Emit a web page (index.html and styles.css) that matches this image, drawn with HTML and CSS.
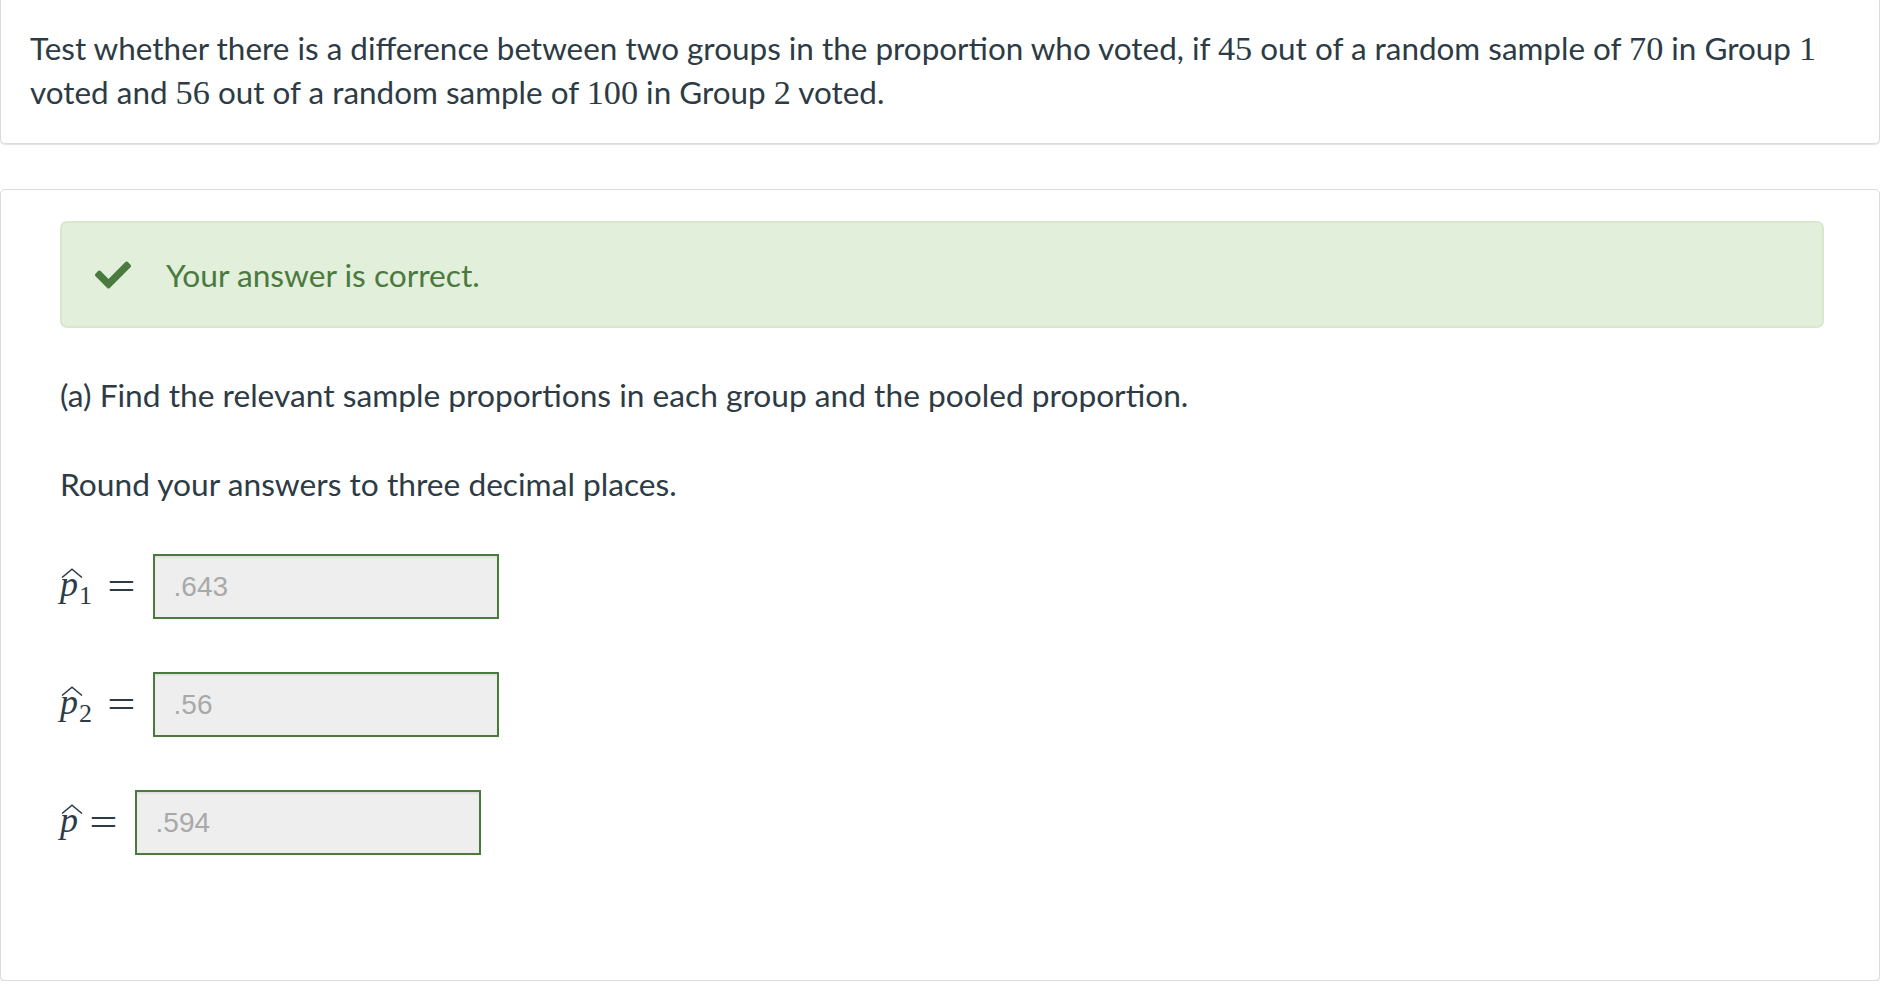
FILE: index.html
```html
<!DOCTYPE html>
<html lang="en">
<head>
<meta charset="utf-8">
<title>Quiz question</title>
<link rel="stylesheet" href="styles.css">
</head>
<body>
<div class="card card-question">
  <p class="question">Test whether there is a difference between two groups in the proportion who voted, if <span class="mn">45</span> out of a random sample of <span class="mn">70</span> in Group <span class="mn">1</span> voted and <span class="mn">56</span> out of a random sample of <span class="mn">100</span> in Group <span class="mn">2</span> voted.</p>
</div>

<div class="card card-answer">
  <div class="alert">
    <svg class="check" viewBox="0 72 512 368" width="36" height="28" aria-hidden="true"><path d="M173.898 439.404l-166.4-166.4c-9.997-9.997-9.997-26.206 0-36.204l36.203-36.204c9.997-9.998 26.207-9.998 36.204 0L192 312.69 432.095 72.596c9.997-9.997 26.207-9.997 36.204 0l36.203 36.204c9.997 9.997 9.997 26.206 0 36.204l-294.4 294.401c-9.998 9.997-26.207 9.997-36.204-.001z"/></svg>
    <span class="alert-text">Your answer is correct.</span>
  </div>

  <p class="part part-a">(a) Find the relevant sample proportions in each group and the pooled proportion.</p>
  <p class="part part-round">Round your answers to three decimal places.</p>

  <div class="answers">
    <div class="row">
      <span class="math"><span class="hatvar"><svg class="hat" viewBox="0 0 22 10" width="22" height="10"><path d="M1 9.5 L11 1.2 L21 9.5" /></svg><span class="mi">p</span></span><span class="sub">1</span><span class="eq">=</span></span>
      <div class="input">.643</div>
    </div>
    <div class="row">
      <span class="math"><span class="hatvar"><svg class="hat" viewBox="0 0 22 10" width="22" height="10"><path d="M1 9.5 L11 1.2 L21 9.5" /></svg><span class="mi">p</span></span><span class="sub">2</span><span class="eq">=</span></span>
      <div class="input">.56</div>
    </div>
    <div class="row">
      <span class="math"><span class="hatvar"><svg class="hat" viewBox="0 0 22 10" width="22" height="10"><path d="M1 9.5 L11 1.2 L21 9.5" /></svg><span class="mi">p</span></span><span class="eq eq-nosub">=</span></span>
      <div class="input">.594</div>
    </div>
  </div>
</div>
</body>
</html>
```

FILE: styles.css
```css
html, body {
  margin: 0;
  padding: 0;
  background: #ffffff;
}

body {
  font-family: Lato, "Noto Sans", sans-serif;
  color: #2d3b45;
  font-size: 31.7px;
  line-height: 44px;
}

.card {
  background: #ffffff;
  border: 1px solid #dcdcdc;
  border-radius: 5px;
  box-shadow: 0 1px 1px rgba(0, 0, 0, 0.12);
}

.card-question {
  border-top: 0;
  border-top-left-radius: 0;
  border-top-right-radius: 0;
  padding: 26px 30px 29px 29px;
}

.question {
  margin: 0;
  font-size: 31.45px;
}

.mn {
  font-family: "Liberation Serif", "Times New Roman", serif;
  font-size: 1.09em;
}

.card-answer {
  margin-top: 45px;
  padding: 31px 55px 125px 59px;
}

.alert {
  display: flex;
  align-items: center;
  height: 107px;
  box-sizing: border-box;
  background: #e2efda;
  border: 2px solid #d7e8cc;
  border-radius: 7px;
  padding-left: 33px;
  color: #4a7a3f;
}

.check {
  fill: #4a7a3f;
  flex: none;
}

.alert-text {
  margin-left: 35px;
}

.part {
  margin: 0;
}

.part-a {
  margin-top: 45px;
}

.part-round {
  margin-top: 45px;
}

.answers {
  margin-top: 48px;
  display: flex;
  flex-direction: column;
  gap: 53px;
}

.row {
  display: flex;
  align-items: baseline;
}

.math {
  display: inline-block;
  white-space: nowrap;
  font-family: "Liberation Serif", "Times New Roman", serif;
  color: #2d3b45;
  line-height: 1;
}

.hatvar {
  position: relative;
  display: inline-block;
}

.hat {
  position: absolute;
  left: 1px;
  top: 2px;
  fill: none;
  stroke: #2d3b45;
  stroke-width: 1.5;
}

.mi {
  font-style: italic;
  font-size: 36px;
  line-height: 1;
}

.sub {
  font-size: 26px;
  line-height: 1;
  margin-left: 1px;
  vertical-align: -8px;
}

.eq {
  display: inline-block;
  font-size: 40px;
  line-height: 1;
  margin-left: 18px;
  margin-right: 20px;
  transform: scaleX(1.25);
  vertical-align: -4px;
}

.eq-nosub {
  margin-left: 14px;
}

.input {
  width: 346px;
  height: 65px;
  box-sizing: border-box;
  border: 2px solid #4b7a3e;
  background: #eeeeee;
  font-family: "Liberation Sans", Arial, sans-serif;
  font-size: 28px;
  line-height: 61px;
  color: #a9a9a9;
  padding-left: 19px;
  box-shadow: inset 0 2px 2px rgba(0, 0, 0, 0.06);
}
```
